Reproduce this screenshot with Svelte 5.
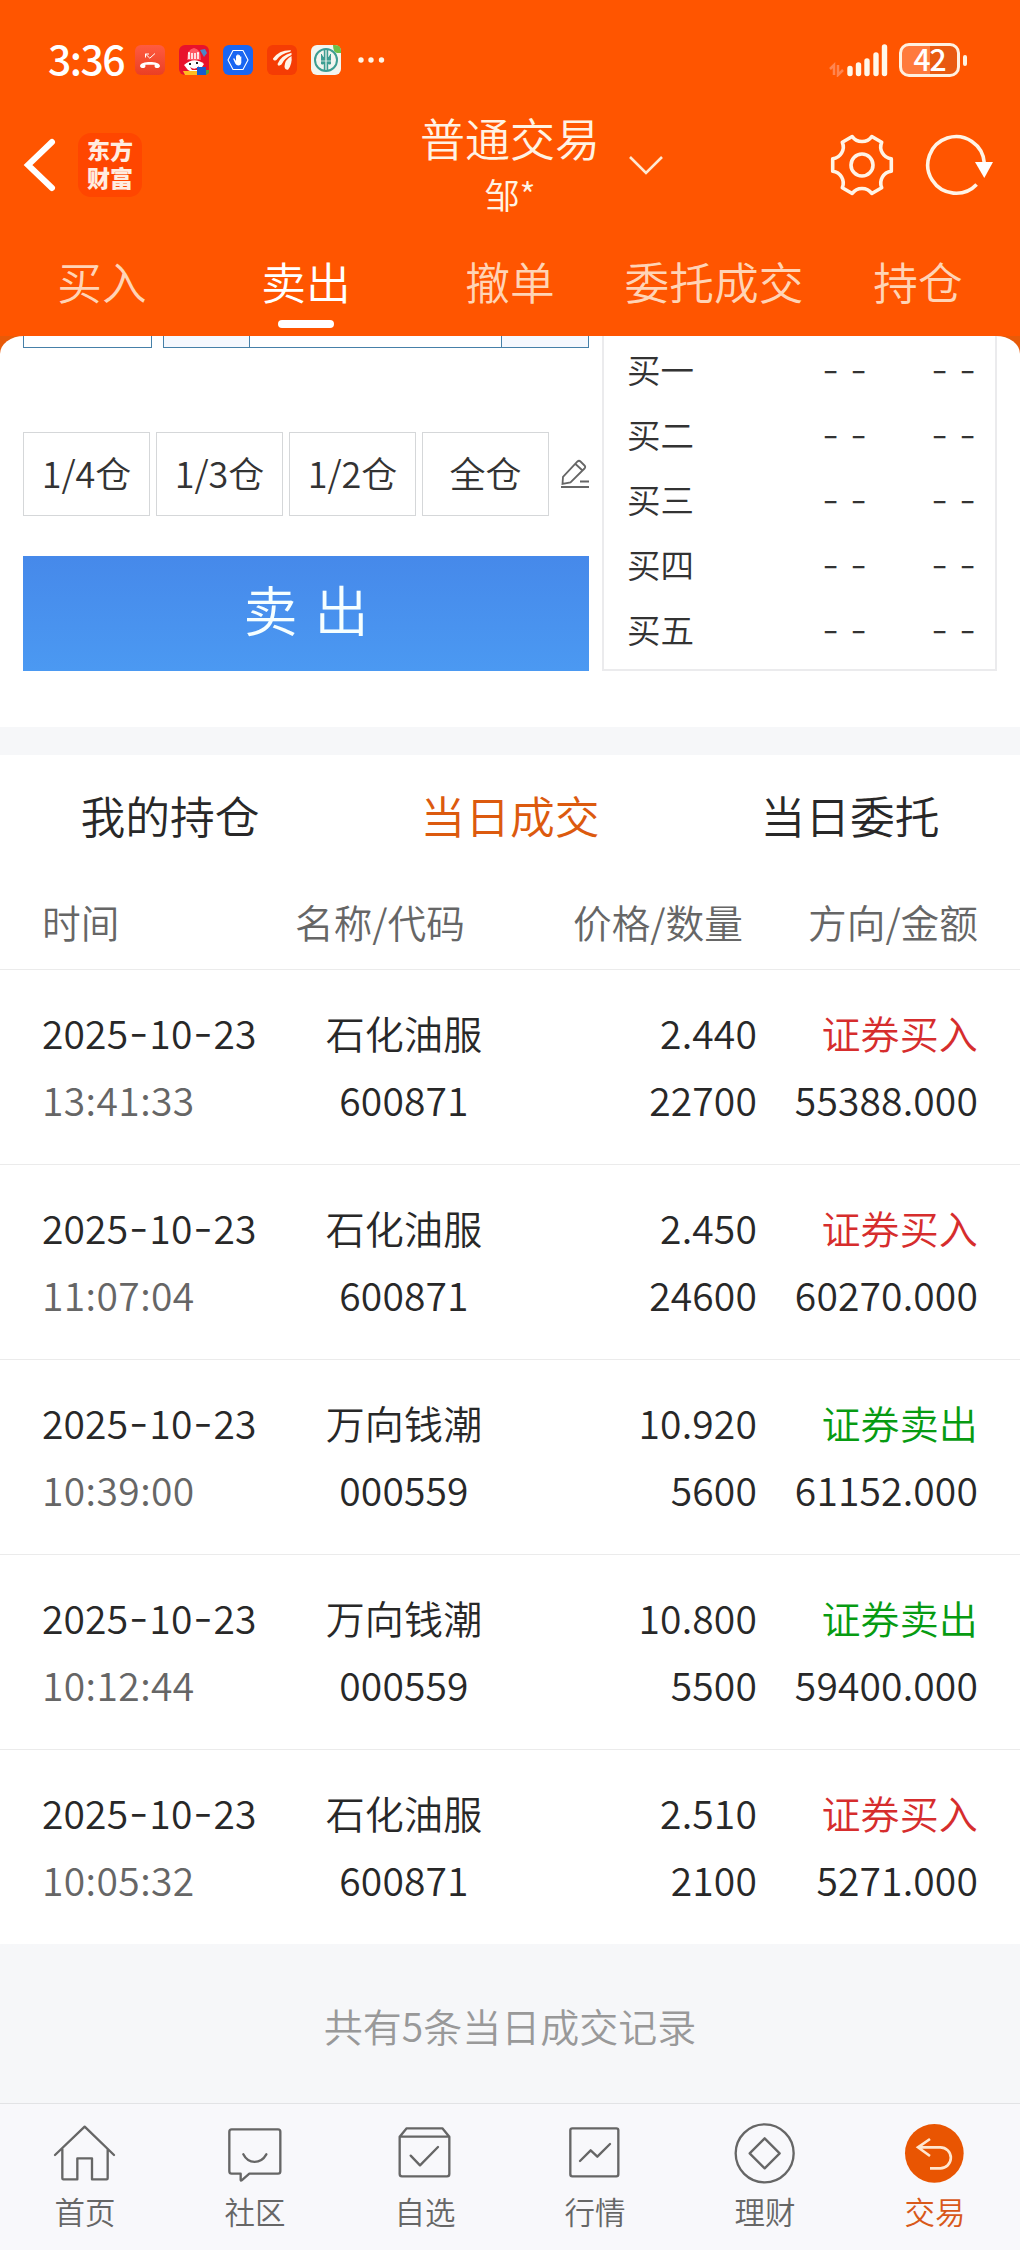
<script>
	let activeTab = '卖出';
	let activeList = '当日成交';
	let activeNav = '交易';

	const tabs = ['买入', '卖出', '撤单', '委托成交', '持仓'];
	const portions = ['1/4仓', '1/3仓', '1/2仓', '全仓'];
	const bids = ['买一', '买二', '买三', '买四', '买五'];
	const lists = ['我的持仓', '当日成交', '当日委托'];

	const deals = [
		{ date: '2025-10-23', time: '13:41:33', name: '石化油服', code: '600871', price: '2.440', count: '22700', side: 'buy', amount: '55388.000' },
		{ date: '2025-10-23', time: '11:07:04', name: '石化油服', code: '600871', price: '2.450', count: '24600', side: 'buy', amount: '60270.000' },
		{ date: '2025-10-23', time: '10:39:00', name: '万向钱潮', code: '000559', price: '10.920', count: '5600', side: 'sell', amount: '61152.000' },
		{ date: '2025-10-23', time: '10:12:44', name: '万向钱潮', code: '000559', price: '10.800', count: '5500', side: 'sell', amount: '59400.000' },
		{ date: '2025-10-23', time: '10:05:32', name: '石化油服', code: '600871', price: '2.510', count: '2100', side: 'buy', amount: '5271.000' }
	];

	const navItems = [
		{ name: '首页', path: 'M6 102 L95 17 L183 102 M28 84 V172 Q28 175 31 175 H73 V112 H117 V175 H161 Q164 175 164 172 V84' },
		{ name: '社区', path: 'M26 25 H165 Q172 25 172 32 V151 Q172 158 165 158 H79 L56 178 Q53 180 53 176 V158 H26 Q19 158 19 151 V32 Q19 25 26 25 Z M61 100 C76 130 113 130 130 100' },
		{ name: '自选', path: 'M20 47 H169 V159 Q169 166 162 166 H27 Q20 166 20 159 V47 L41 22 H148 L169 47 M53 104 L81 133 L135 78' },
		{ name: '行情', path: 'M28 22 H160 Q166 22 166 28 V160 Q166 166 160 166 H28 Q22 166 22 160 V28 Q22 22 28 22 Z M51 120 L83 88 L103 107 L141 69' },
		{ name: '理财', path: 'M8 97 a87 87 0 1 0 174 0 a87 87 0 1 0 -174 0 Z M95 52 L140 97 L95 142 L50 97 Z' },
		{ name: '交易', path: 'M81 54 L45 79 L81 105 M45 79 H112 A31.5 31.5 0 0 1 112 142 H81' }
	];
</script>

<div class="app">
	<header>
		<div class="status">
			<span class="clock">3:36</span>
			<div class="notices">
				<svg viewBox="0 0 30 30">
					<defs>
						<linearGradient id="call" x1="0" y1="0" x2="0" y2="1">
							<stop offset="0" stop-color="#ff5b40" />
							<stop offset="1" stop-color="#ea3f24" />
						</linearGradient>
					</defs>
					<rect width="30" height="30" rx="6" fill="url(#call)" />
					<path d="M10.5 12.5 V9 H14 M10.5 9 L14.8 13.2 L20 8.5" fill="none" stroke="#fff" stroke-width="1" />
					<path d="M5 21 C5 15.5 25 15.5 25 21 C25 23.4 20 23.8 19.6 21.5 V19.8 H10.4 V21.5 C10 23.8 5 23.4 5 21 Z" fill="#fff" />
				</svg>
				<svg viewBox="0 0 30 30">
					<rect width="30" height="30" rx="6" fill="#e8122c" />
					<path d="M21 5 l5 -1 l2 4 l-3 4 z" fill="#4b87c8" />
					<path d="M8 15 Q8 4 15 3 Q22 4 22 15 Z" fill="#ff5864" />
					<path d="M10 8 V14 M13 8 V14 M16 8 V14 M19 8 V14 M9 8 H11 M18 8 H20" stroke="#fff" stroke-width="1.6" />
					<path d="M5 20 Q15 11 25 19 L21 25 Q15 29 9 25 Z" fill="#fff" />
					<path d="M11 22 Q16 26 20 21 L19 25 L13 25 Z" fill="#e8122c" />
					<path d="M10 18 h2 v2 h-2 z M17 17 h2 v2 h-2 z" fill="#222" />
					<path d="M4 26 H18 V30 H6 Z" fill="#ffbd20" />
					<path d="M18 22 H27 V30 H18 Z" fill="#155bd0" />
					<path d="M27 25 h3 v3 l-3 2 z" fill="#54a238" />
				</svg>
				<svg viewBox="0 0 30 30">
					<rect width="30" height="30" rx="6" fill="#1a66f2" />
					<path d="M10 5.5 H20 L25 15 L20 24.5 H10 L5 15 Z" fill="none" stroke="#fff" stroke-width="1.1" stroke-linejoin="round" />
					<path d="M11 13 L13 16 V10.5 H14.2 V14 V9.5 H15.6 V14 V10.2 H17 V14 V11.5 H18.3 V18 Q18 20.5 15.3 20.5 Q13.4 20.5 12.4 18.8 L10.2 14 Z" fill="#fff" />
				</svg>
				<svg viewBox="0 0 30 30">
					<rect width="30" height="30" rx="6" fill="#f53c04" />
					<path d="M6 13.5 Q12 5 23.5 5.2 Q25 6 23 6.8 Q14 8.5 9.5 15 Q6 16.5 6 13.5 Z" fill="#fff4e6" />
					<path d="M10.5 19 Q14 10.5 24.5 7.8 V10 Q17.5 13 14.5 19.5 Q11 22 10.5 19 Z" fill="#fff4e6" />
					<path d="M17.5 21.5 Q17.5 15 24.5 11 Q25.5 19 21 24.8 Q17.8 25 17.5 21.5 Z" fill="#fff4e6" />
				</svg>
				<svg viewBox="0 0 30 30">
					<rect width="30" height="30" rx="6" fill="#f3f5ef" />
					<path d="M22 0 H24 Q30 0 30 6 V8 H26 Q22 7 22 0 Z" fill="#6cc04a" />
					<circle cx="15" cy="15" r="11" fill="none" stroke="#3d9d92" stroke-width="2" />
					<path d="M13.6 4 V26 M16.4 4 V26" stroke="#3d9d92" stroke-width="1.6" />
					<path d="M10.5 9 V19 H12.5 V12 M19.5 9 V19 H17.5 V12" fill="#3d9d92" stroke="#3d9d92" />
					<path d="M10 16 H20" stroke="#f3f5ef" stroke-width=".7" />
				</svg>
			</div>
			<svg class="more" viewBox="0 0 28 8" fill="#fff4e6">
				<circle cx="4" cy="4" r="2.7" />
				<circle cx="14" cy="4" r="2.7" />
				<circle cx="24.5" cy="4" r="2.7" />
			</svg>
			<svg class="signal" viewBox="0 0 60 34">
				<path d="M1 26 L5 22 V32 M9 22 V32 L14 27" fill="none" stroke="#ff8550" stroke-width="2.5" />
				<path d="M21 25.5 V30.5 M29.5 22 V30.5 M38 18 V30.5 M47 12 V30.5 M55.5 4 V30.5" stroke="#fff8ea" stroke-width="5.4" stroke-linecap="round" />
			</svg>
			<span class="battery">42</span>
			<span class="nub"></span>
		</div>

		<div class="title-bar">
			<svg class="back" viewBox="0 0 36 56">
				<path d="M31 5 L7 28 L31 51" fill="none" stroke="#fff" stroke-width="6" stroke-linecap="round" />
			</svg>
			<div class="logo">东方财富</div>
			<div class="title">
				<h1>普通交易</h1>
				<p>邹*</p>
			</div>
			<svg class="down" viewBox="0 0 36 22">
				<path d="M2 3 L18 19 L34 3" fill="none" stroke="#ffe9d2" stroke-width="2.6" />
			</svg>
			<svg class="gear" viewBox="-33 -33 66 66" fill="none" stroke="#fff4e6" stroke-width="3.6" stroke-linejoin="round">
				<path d="M9.8 -28.5 L19.7 -22.8 A12 12 0 0 0 29.3 -6.2 V6.2 A12 12 0 0 0 19.7 22.8 L9.8 28.5 A12 12 0 0 0 -9.8 28.5 L-19.7 22.8 A12 12 0 0 0 -29.3 6.2 V-6.2 A12 12 0 0 0 -19.7 -22.8 L-9.8 -28.5 A12 12 0 0 0 9.8 -28.5 Z" />
				<circle r="11" />
			</svg>
			<svg class="refresh" viewBox="-33 -33 72 66">
				<path d="M28.3 -2 A28.3 28.3 0 1 0 20.6 19.4" fill="none" stroke="#fff4e6" stroke-width="3.6" />
				<path d="M19 -3 H37 L28.3 13 Z" fill="#fff" />
			</svg>
		</div>

		<nav class="tabs">
			{#each tabs as tab}
				<button class:active={tab === activeTab} on:click={() => (activeTab = tab)}>{tab}</button>
			{/each}
		</nav>
	</header>

	<div class="sheet">
		<section class="trade">
			<div class="order">
				<div class="fields">
					<div class="field"></div>
					<div class="stepper"><i></i><i></i><i></i></div>
				</div>
				<div class="portions">
					{#each portions as portion}
						<button>{portion}</button>
					{/each}
					<svg viewBox="0 0 28 30" fill="none" stroke="#666" stroke-width="1.8">
						<path d="M1.5 25 L2 18 L16.5 2.5 Q18 1 19.5 2.5 L23.5 6.5 Q25 8 23.5 9.5 L9.5 23.5 Z M14.5 5 L21.5 11.5" />
						<path d="M19 22.5 H28 M0 28 H28" />
					</svg>
				</div>
				<button class="submit">卖 出</button>
			</div>
			<div class="bids">
				{#each bids as bid}
					<div class="bid">
						<span>{bid}</span>
						<b>- -</b>
						<b>- -</b>
					</div>
				{/each}
			</div>
		</section>

		<div class="lists">
			{#each lists as list}
				<button class:active={list === activeList} on:click={() => (activeList = list)}>{list}</button>
			{/each}
		</div>

		<div class="columns">
			<span>时间</span>
			<span>名称/代码</span>
			<span>价格/数量</span>
			<span class="right">方向/金额</span>
		</div>

		{#each deals as deal}
			<div class="deal">
				<div>
					<p>{#each deal.date.split('-') as part, i}{#if i}<i>-</i>{/if}{part}{/each}</p>
					<p class="time">{deal.time}</p>
				</div>
				<div class="stock">
					<p>{deal.name}</p>
					<p>{deal.code}</p>
				</div>
				<div class="right">
					<p>{deal.price}</p>
					<p>{deal.count}</p>
				</div>
				<div class="right">
					<p class={deal.side}>{deal.side === 'buy' ? '证券买入' : '证券卖出'}</p>
					<p>{deal.amount}</p>
				</div>
			</div>
		{/each}
	</div>

	<div class="summary">共有{deals.length}条当日成交记录</div>

	<nav class="bottom">
		{#each navItems as item}
			<button class:active={item.name === activeNav} on:click={() => (activeNav = item.name)}>
				<svg viewBox="0 0 192 192">
					{#if item.name === activeNav}
						<circle cx="94" cy="97" r="88" />
					{/if}
					<path d={item.path} />
				</svg>
				<span>{item.name}</span>
			</button>
		{/each}
	</nav>
</div>

<style>
	:global(body) {
		margin: 0;
	}

	.app {
		display: flex;
		flex-direction: column;
		width: 1020px;
		height: 2250px;
		overflow: hidden;
		background: #f6f7f9;
		color: #282828;
		font-family: 'Noto Sans CJK SC', sans-serif;
		font-weight: 350;
		font-size: 39px;
	}

	button {
		margin: 0;
		padding: 0;
		border: none;
		background: none;
		color: inherit;
		font: inherit;
	}

	p,
	h1 {
		margin: 0;
		font-weight: inherit;
	}

	svg {
		display: block;
		flex: none;
	}

	header {
		height: 336px;
		background: #ff5500;
		color: #fff;
	}

	.status {
		display: flex;
		align-items: center;
		height: 118px;
		box-sizing: border-box;
		padding: 2px 53px 0 48px;
	}

	.clock {
		width: 87px;
		font-size: 41px;
		line-height: 50px;
		letter-spacing: -1.6px;
		font-weight: 500;
		margin-top: -6px;
	}

	.notices {
		display: flex;
		gap: 14px;
	}

	.notices svg {
		width: 30px;
		height: 30px;
	}

	.more {
		width: 28px;
		height: 8px;
		margin-left: 16px;
	}

	.signal {
		width: 60px;
		height: 34px;
		margin: 0 10px 0 auto;
	}

	.battery {
		width: 61px;
		height: 34px;
		box-sizing: border-box;
		border: 3px solid #fff1e0;
		border-radius: 10px;
		background: linear-gradient(90deg, #ff7a3c 50%, #e85a10 50%);
		font-size: 30px;
		line-height: 24px;
		letter-spacing: -1px;
		text-align: center;
		font-weight: 450;
	}

	.nub {
		width: 4px;
		height: 11px;
		margin-left: 3px;
		border-radius: 2px;
		background: #fff1e0;
	}

	.title-bar {
		display: flex;
		align-items: center;
		height: 94px;
	}

	.back {
		width: 36px;
		height: 56px;
		margin-left: 21px;
	}

	.logo {
		width: 64px;
		height: 64px;
		box-sizing: border-box;
		margin-left: 21px;
		padding: 3px 8px 0;
		border-radius: 13px;
		background: #ff4600;
		color: #ffece0;
		font-size: 23px;
		line-height: 27.5px;
		font-weight: 900;
		text-align: center;
	}

	.title {
		width: 180px;
		margin-left: 278px;
		text-align: center;
		color: #fff3e4;
	}

	.title h1 {
		font-size: 45px;
		line-height: 58px;
		margin-top: -1px;
	}

	.title p {
		font-size: 35px;
		line-height: 53px;
	}

	.down {
		width: 36px;
		height: 22px;
		margin-left: 28px;
	}

	.gear {
		width: 66px;
		height: 66px;
		margin-left: 165px;
	}

	.refresh {
		width: 72px;
		height: 66px;
		margin-left: 28px;
	}

	.tabs {
		display: flex;
		height: 124px;
	}

	.tabs button {
		display: flex;
		flex-direction: column;
		align-items: center;
		width: 204px;
		padding-top: 39px;
		color: #ffd4b6;
		font-size: 44.7px;
		line-height: 60px;
	}

	.tabs .active {
		color: #fff;
	}

	.tabs .active::after {
		content: '';
		width: 56px;
		height: 8px;
		margin-top: 9px;
		border-radius: 4px;
		background: #fff;
	}

	.sheet {
		background: #fff;
		border-radius: 24px 24px 0 0 / 18px 18px 0 0;
		box-shadow: 0 -18px 0 #e85a08;
		clip-path: inset(0);
	}

	.trade {
		display: flex;
		align-items: flex-start;
		height: 391px;
		padding-left: 23px;
	}

	.order {
		width: 566px;
	}

	.fields {
		display: flex;
		justify-content: space-between;
	}

	.field {
		width: 127px;
		height: 11px;
		border: 1px solid #4680a8;
		border-top: none;
	}

	.stepper {
		display: grid;
		grid-template-columns: 85px 1fr 86px;
		width: 424px;
		height: 11px;
		border: 1px solid #4680a8;
		border-top: none;
	}

	.stepper i {
		background: #f5f8fe;
	}

	.stepper i:nth-child(2) {
		border: solid #4680a8;
		border-width: 0 1px;
		background: #fff;
	}

	.portions {
		display: flex;
		align-items: center;
		gap: 6px;
		margin-top: 84px;
	}

	.portions button {
		width: 127px;
		height: 84px;
		box-sizing: border-box;
		border: 1px solid #d5d7d9;
		color: #333;
		font-size: 36px;
		line-height: 78px;
		padding-bottom: 4px;
	}

	.portions svg {
		width: 28px;
		height: 30px;
		margin-left: 6px;
	}

	.submit {
		display: block;
		width: 566px;
		height: 115px;
		margin-top: 40px;
		padding-bottom: 9px;
		background: linear-gradient(#4689ea, #4b99f2);
		color: #f6ffff;
		font-size: 54px;
		line-height: 106px;
		word-spacing: 5px;
	}

	.bids {
		width: 391px;
		height: 333px;
		margin-left: 13px;
		border: 2px solid #ebebed;
		border-top: none;
	}

	.bid {
		display: grid;
		grid-template-columns: 193px 109px 1fr;
		height: 65px;
		padding-left: 23px;
		color: #333;
		font-size: 33.5px;
		line-height: 66px;
	}

	.bid b {
		font-family: Inter, sans-serif;
		font-weight: 300;
		font-size: 38px;
		line-height: 69px;
		padding-left: 2px;
	}

	.lists {
		display: flex;
		border-top: 28px solid #f6f7f9;
	}

	.lists button {
		width: 340px;
		height: 124px;
		padding-bottom: 4px;
		font-size: 44.8px;
		line-height: 120px;
	}

	.lists .active {
		color: #dc5a0e;
	}

	.columns {
		display: grid;
		grid-template-columns: 253px 278px 200px 1fr;
		height: 90px;
		padding: 0 42px;
		border-bottom: 1px solid #ebebeb;
		color: #666;
		font-size: 38.7px;
		line-height: 85px;
	}

	.deal {
		display: grid;
		grid-template-columns: 260px 204px 251px 1fr;
		height: 194px;
		box-sizing: border-box;
		padding: 29px 42px 0;
		line-height: 67px;
		letter-spacing: 0.15px;
	}

	.deal + .deal {
		height: 195px;
		border-top: 1px solid #ebebeb;
	}

	.deal i {
		margin: 0 0.5px;
		font-family: Inter, sans-serif;
		font-style: normal;
		font-weight: 300;
		font-size: 44px;
		line-height: 1;
	}

	.stock {
		text-align: center;
	}

	.time {
		color: #666;
		letter-spacing: 0.4px;
	}

	.right {
		text-align: right;
	}

	.buy {
		color: #d62d2d;
	}

	.sell {
		color: #079b12;
	}

	.summary {
		height: 159px;
		line-height: 162px;
		text-align: center;
		color: #999;
	}

	.bottom {
		display: flex;
		height: 146px;
		border-top: 1px solid #e2e3e5;
		background: #f8f8fb;
	}

	.bottom button {
		display: flex;
		flex-direction: column;
		align-items: center;
		width: 170px;
		padding-top: 17px;
		color: #666;
		font-size: 30.5px;
		line-height: 44px;
	}

	.bottom svg {
		width: 64px;
		height: 64px;
		margin-bottom: 4px;
	}

	.bottom path {
		fill: none;
		stroke: #666;
		stroke-width: 7;
		stroke-linejoin: round;
		stroke-linecap: round;
	}

	.bottom circle {
		fill: #e95502;
	}

	.bottom .active {
		color: #d9591a;
	}

	.bottom .active path {
		stroke: #ffe6cf;
		stroke-width: 8;
		stroke-linecap: butt;
		stroke-linejoin: miter;
	}
</style>
